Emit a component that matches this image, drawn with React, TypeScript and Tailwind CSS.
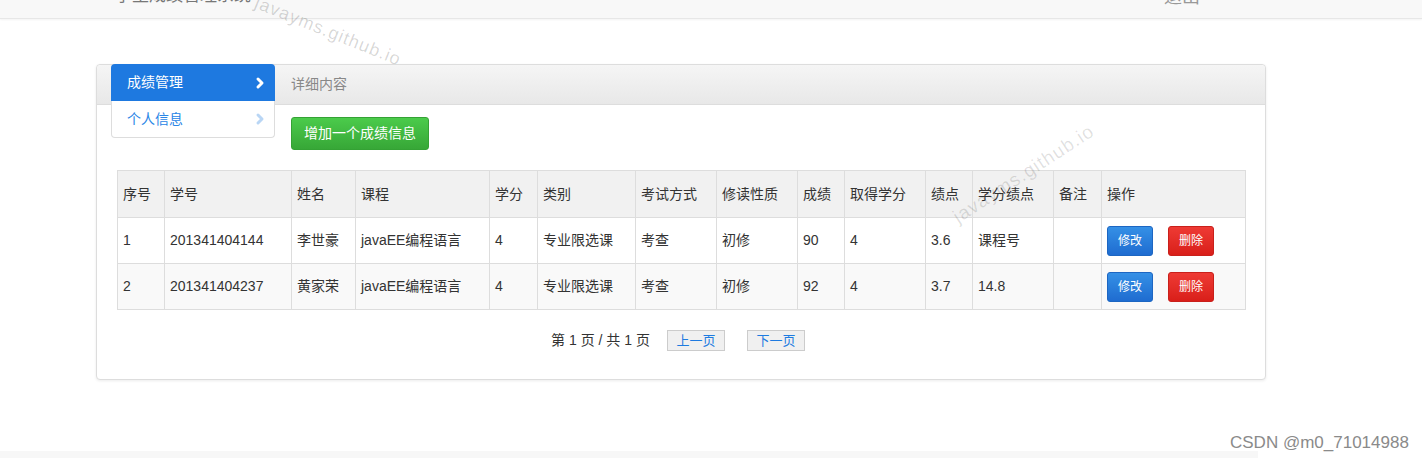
import { ChevronRight } from 'lucide-react';

const COLS = [47, 127, 64, 134, 48, 98, 81, 81, 47, 81, 47, 81, 48, 144];

const HEADERS = ['序号', '学号', '姓名', '课程', '学分', '类别', '考试方式', '修读性质', '成绩', '取得学分', '绩点', '学分绩点', '备注', '操作'];

const ROWS = [
    ['1', '201341404144', '李世豪', 'javaEE编程语言', '4', '专业限选课', '考查', '初修', '90', '4', '3.6', '课程号', ''],
    ['2', '201341404237', '黄家荣', 'javaEE编程语言', '4', '专业限选课', '考查', '初修', '92', '4', '3.7', '14.8', ''],
];

export default function App() {
    return (
        <div className="relative w-full h-[458px] overflow-hidden bg-white text-[#333] font-['Liberation_Sans','Noto_Sans_CJK_SC',sans-serif]">
            {/* Top navbar (scrolled, only the bottom edge shows) */}
            <div className="h-[19px] overflow-hidden bg-[#f8f8f8] border-b border-[#e7e7e7] shadow-[0_1px_2px_rgba(0,0,0,0.05)] flex items-start justify-between pl-[115px] pr-[222px]">
                <span className="-mt-[13px] text-[17px] leading-[17px] text-[#777]">学生成绩管理系统</span>
                <span className="-mt-[12px] text-[18px] leading-[18px] text-[#999]">退出</span>
            </div>

            <div className="pl-[96px] pt-[45px]">
                <div className="w-[1170px] h-[316px] border border-[#ddd] rounded-[4px] bg-white shadow-[0_1px_3px_rgba(0,0,0,0.08)]">
                    {/* Panel header */}
                    <div className="h-[40px] bg-gradient-to-b from-[#f5f5f5] to-[#e8e8e8] border-b border-[#ddd] rounded-t-[4px] flex items-center pl-[194px]">
                        <span className="text-[14px] text-[#888]">详细内容</span>
                    </div>

                    {/* Nav + add button */}
                    <div className="flex items-start">
                        <div className="relative z-10 -mt-[41px] ml-[14px] w-[164px] flex flex-col">
                            <div className="h-[37px] bg-[#1e79e0] rounded-t-[4px] flex items-center justify-between pl-[16px] pr-[7px] text-white text-[14px]">
                                <span>成绩管理</span>
                                <ChevronRight className="w-[16px] h-[16px]" strokeWidth={4.5} />
                            </div>
                            <div className="h-[37px] bg-white border border-t-0 border-[#ddd] rounded-b-[4px] flex items-center justify-between pl-[15px] pr-[6px] text-[#2a86e6] text-[14px]">
                                <span>个人信息</span>
                                <ChevronRight className="w-[16px] h-[16px] text-[#b9d6f5]" strokeWidth={4.5} />
                            </div>
                        </div>
                        <button className="ml-[16px] mt-[12px] h-[33px] w-[138px] rounded-[3px] border border-[#34a234] bg-gradient-to-b from-[#4bcb4b] to-[#37a737] text-white text-[14px]">
                            增加一个成绩信息
                        </button>
                    </div>

                    {/* Table */}
                    <div className="mt-[20px] mx-[20px]">
                        <table className="w-[1128px] table-fixed border-collapse text-[14px]">
                            <colgroup>
                                {COLS.map((w, i) => (
                                    <col key={i} style={{ width: w }} />
                                ))}
                            </colgroup>
                            <thead>
                                <tr className="h-[47px] bg-[#f1f1f1]">
                                    {HEADERS.map((h) => (
                                        <th key={h} className="border border-[#ddd] px-[5px] text-left font-normal">{h}</th>
                                    ))}
                                </tr>
                            </thead>
                            <tbody>
                                {ROWS.map((r, ri) => (
                                    <tr key={ri} className={ri % 2 === 0 ? 'h-[46px] bg-white' : 'h-[46px] bg-[#f9f9f9]'}>
                                        {r.map((c, ci) => (
                                            <td key={ci} className="border border-[#ddd] px-[5px]">{c}</td>
                                        ))}
                                        <td className="border border-[#ddd] px-[5px]">
                                            <div className="flex items-center gap-[15px]">
                                                <button className="w-[46px] h-[30px] rounded-[3px] border border-[#1d66c2] bg-gradient-to-b from-[#3590e6] to-[#1f6cd0] text-white text-[12px]">修改</button>
                                                <button className="w-[46px] h-[30px] rounded-[3px] border border-[#c9201b] bg-gradient-to-b from-[#ee3a34] to-[#d91e19] text-white text-[12px]">删除</button>
                                            </div>
                                        </td>
                                    </tr>
                                ))}
                            </tbody>
                        </table>
                    </div>

                    {/* Pagination */}
                    <div className="mt-[20px] pr-[6px] flex items-center justify-center">
                        <span className="text-[14px] text-[#333]">第 1 页 / 共 1 页</span>
                        <button className="ml-[17px] w-[58px] h-[21px] bg-[#f0f0f0] border border-[#ccc] text-[#1e7be0] text-[13px] leading-none">上一页</button>
                        <button className="ml-[22px] w-[58px] h-[21px] bg-[#f0f0f0] border border-[#ccc] text-[#1e7be0] text-[13px] leading-none">下一页</button>
                    </div>
                </div>
            </div>

            {/* Bottom strip */}
            <div className="absolute left-0 bottom-0 w-[1258px] h-[7px] bg-[#f7f7f7]" />

            {/* Watermarks */}
            <div className="absolute left-[250px] top-[18px] rotate-[22deg] text-[18px] tracking-[1px] text-[rgba(0,0,0,0.16)] pointer-events-none">javayms.github.io</div>
            <div className="absolute left-[942px] top-[160px] -rotate-[33deg] text-[19px] tracking-[1px] text-[rgba(0,0,0,0.12)] pointer-events-none">javayms.github.io</div>
            <div className="absolute left-[1230px] top-[430px] text-[17px] text-[#8a8a8a]">CSDN @m0_71014988</div>
        </div>
    );
}
